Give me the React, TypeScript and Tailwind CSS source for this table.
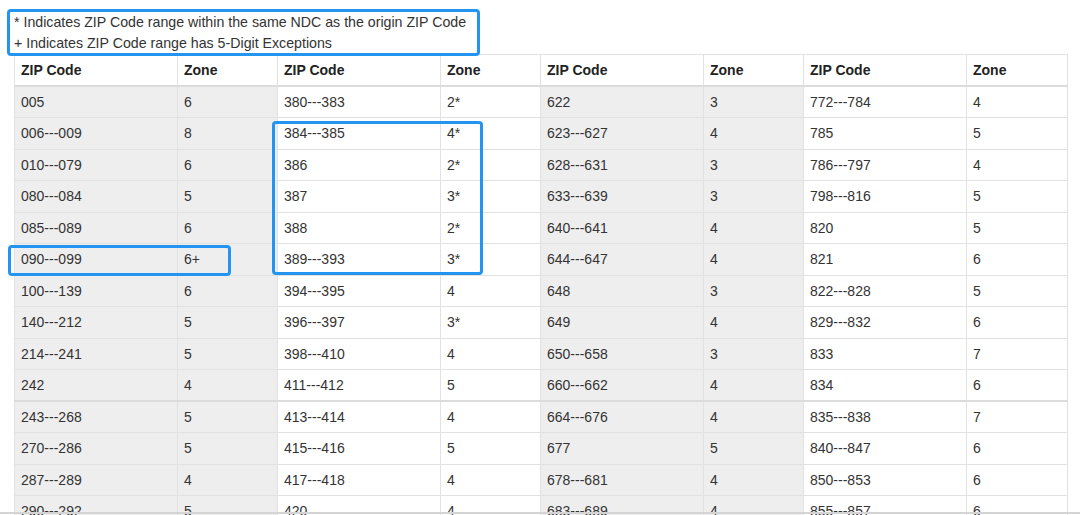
const rows: [string, string, string, string, string, string, string, string][] = [
  ["005", "6", "380---383", "2*", "622", "3", "772---784", "4"],
  ["006---009", "8", "384---385", "4*", "623---627", "4", "785", "5"],
  ["010---079", "6", "386", "2*", "628---631", "3", "786---797", "4"],
  ["080---084", "5", "387", "3*", "633---639", "3", "798---816", "5"],
  ["085---089", "6", "388", "2*", "640---641", "4", "820", "5"],
  ["090---099", "6+", "389---393", "3*", "644---647", "4", "821", "6"],
  ["100---139", "6", "394---395", "4", "648", "3", "822---828", "5"],
  ["140---212", "5", "396---397", "3*", "649", "4", "829---832", "6"],
  ["214---241", "5", "398---410", "4", "650---658", "3", "833", "7"],
  ["242", "4", "411---412", "5", "660---662", "4", "834", "6"],
  ["243---268", "5", "413---414", "4", "664---676", "4", "835---838", "7"],
  ["270---286", "5", "415---416", "5", "677", "5", "840---847", "6"],
  ["287---289", "4", "417---418", "4", "678---681", "4", "850---853", "6"],
  ["290---292", "5", "420", "4", "683---689", "4", "855---857", "6"],
];

const widths = ["w-[163px]", "w-[100px]", "w-[163px]", "w-[100px]", "w-[163px]", "w-[100px]", "w-[163px]", "w-[101px]"];

export default function App() {
  return (
    <div className="relative h-[515px] overflow-hidden bg-white font-['Liberation_Sans',Arial,sans-serif] text-[14px] text-[#333]">
      {/* Legend */}
      <div className="pl-[14px] pt-[12px] text-[14.2px] leading-[21px]">
        <p>* Indicates ZIP Code range within the same NDC as the origin ZIP Code</p>
        <p>+ Indicates ZIP Code range has 5-Digit Exceptions</p>
      </div>

      {/* Zone table */}
      <table className="ml-[14px] w-[1053px] table-fixed border-collapse border border-[#dcdcdc]">
        <colgroup>
          {widths.map((w, i) => (
            <col key={i} className={w} />
          ))}
        </colgroup>
        <thead>
          <tr className="h-[31.5px]">
            {["ZIP Code", "Zone", "ZIP Code", "Zone", "ZIP Code", "Zone", "ZIP Code", "Zone"].map((h, i) => (
              <th
                key={i}
                className="border border-b-2 border-[#e2e2e2] border-b-[#dcdcdc] bg-white py-0 pl-[6px] text-left align-middle font-bold leading-[20px] text-[#222]"
              >
                {h}
              </th>
            ))}
          </tr>
        </thead>
        <tbody>
          {rows.map((r, ri) => (
            <tr key={ri} className="h-[31.5px]">
              {r.map((c, ci) => (
                <td
                  key={ci}
                  className={`border border-[#e2e2e2] py-0 pl-[6px] align-middle leading-[20px] ${
                    ci < 2 || (ci > 3 && ci < 6) ? "bg-[#eeeeee]" : "bg-white"
                  } ${ri === 10 ? "border-t-2 border-t-[#dcdcdc]" : ""}`}
                >
                  {c}
                </td>
              ))}
            </tr>
          ))}
        </tbody>
      </table>

      {/* Highlight annotations */}
      <div className="pointer-events-none absolute left-[7px] top-[9px] h-[47px] w-[473px] rounded-[4px] border-[3px] border-[#2394f0]" />
      <div className="pointer-events-none absolute left-[272px] top-[121px] h-[154px] w-[211px] rounded-[4px] border-[3px] border-[#2394f0]" />
      <div className="pointer-events-none absolute left-[8px] top-[245px] h-[31px] w-[223px] rounded-[4px] border-[3px] border-[#2394f0]" />

      <div className="absolute bottom-[1px] left-0 right-0 h-[2px] bg-[#d4d4d4]" />
    </div>
  );
}
